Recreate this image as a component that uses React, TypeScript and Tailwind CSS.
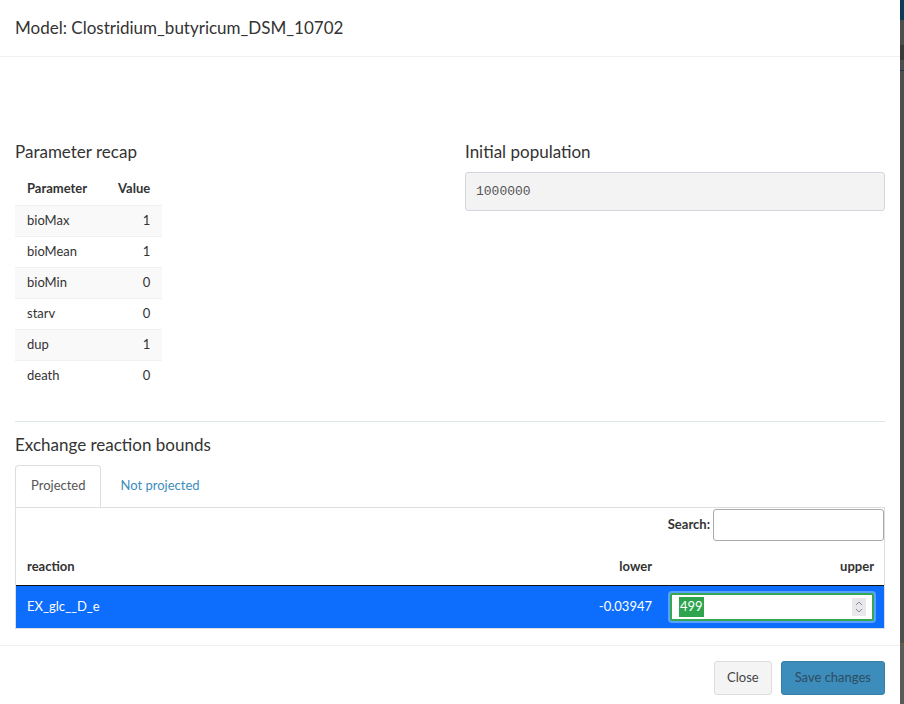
import React from "react";

const params = [
  { name: "bioMax", value: 1 },
  { name: "bioMean", value: 1 },
  { name: "bioMin", value: 0 },
  { name: "starv", value: 0 },
  { name: "dup", value: 1 },
  { name: "death", value: 0 },
];

function Spinner() {
  return (
    <svg width="14" height="18" viewBox="0 0 14 18" className="shrink-0">
      <rect width="14" height="18" fill="#e8e8ec" />
      <path d="M4 7 L7 4 L10 7" fill="none" stroke="#8a8a8a" strokeWidth="1" />
      <path d="M4 11 L7 14 L10 11" fill="none" stroke="#8a8a8a" strokeWidth="1" />
    </svg>
  );
}

export default function App() {
  return (
    <div
      className="flex h-[704px] w-[904px] overflow-hidden bg-white text-[#333]"
      style={{ fontFamily: "Lato, 'Liberation Sans', sans-serif" }}
    >
      {/* modal */}
      <div className="flex w-[900px] flex-col">
        <div className="flex h-[57px] items-center border-b border-[#f0f0f0] px-[15px]">
          <h4 className="text-[17px] text-[#333]">Model: Clostridium_butyricum_DSM_10702</h4>
        </div>

        <div className="px-[15px] pt-[85px]">
          <div className="grid grid-cols-2 gap-[30px]">
            <div>
              <h4 className="text-[17px] leading-[20px]">Parameter recap</h4>
              <table className="mt-[10px] text-[13px]">
                <thead>
                  <tr className="h-[33px]">
                    <th className="px-[12px] text-left font-bold">Parameter</th>
                    <th className="px-[12px] text-right font-bold">Value</th>
                  </tr>
                </thead>
                <tbody>
                  {params.map((p, i) => (
                    <tr
                      key={p.name}
                      className={`h-[31px] border-t border-[#f0f0f0] ${i % 2 === 0 ? "bg-[#f9f9f9]" : "bg-white"}`}
                    >
                      <td className="pl-[12px] pr-[29px]">{p.name}</td>
                      <td className="pl-[12px] pr-[12px] text-right">{p.value}</td>
                    </tr>
                  ))}
                </tbody>
              </table>
            </div>
            <div>
              <h4 className="text-[17px] leading-[20px]">Initial population</h4>
              <div
                className="mt-[10px] flex h-[39px] items-center rounded-[3px] border border-[#d2d6de] bg-[#f3f3f3] px-[10px] text-[13px] text-[#555]"
                style={{ fontFamily: "'Liberation Mono', monospace" }}
              >
                1000000
              </div>
            </div>
          </div>

          <hr className="mt-[30px] border-t border-[#dce8e8]" />

          <h4 className="mt-[13px] text-[17px] leading-[20px]">Exchange reaction bounds</h4>

          <div className="mt-[10px] flex text-[13px]">
            <div className="relative z-10 -mb-px flex h-[42px] items-center rounded-t-[4px] border border-b-white border-[#ddd] bg-white px-[15px] text-[#555]">
              Projected
            </div>
            <div className="flex h-[42px] items-center px-[19px] text-[#3c8dbc]">Not projected</div>
          </div>

          <div className="border border-[#ddd] text-[13px]">
            <div className="flex items-center justify-end gap-[3px] pt-[1px]">
              <span className="font-bold">Search:</span>
              <div className="h-[32px] w-[171px] rounded-[3px] border border-[#aaa]" />
            </div>
            <div className="mt-[8px] grid h-[37px] grid-cols-[1fr_220px_222px] items-center border-b border-[#111] px-[10px] font-bold">
              <span className="pl-[1px]">reaction</span>
              <span className="text-right">lower</span>
              <span className="text-right">upper</span>
            </div>
            <div className="grid h-[42px] grid-cols-[1fr_220px_222px] items-center bg-[#0d6efd] px-[10px] text-white">
              <span className="pl-[1px]">EX_glc__D_e</span>
              <span className="text-right">-0.03947</span>
              <div className="flex justify-end pl-[18px]">
                <div className="flex h-[28px] w-[205px] items-center rounded-[2px] border-2 border-[#34a853] bg-white pl-[7px] pr-[6px] shadow-[0_0_0_2px_#5aa0ff]">
                  <span className="bg-[#2ea44f] px-[1px] text-white">499</span>
                  <span className="flex-1" />
                  <Spinner />
                </div>
              </div>
            </div>
          </div>
        </div>

        <div className="mt-[16px] flex items-center justify-end gap-[9px] border-t border-[#f0f0f0] px-[15px] pt-[15px] text-[13px]">
          <div className="flex h-[34px] items-center rounded-[3px] border border-[#ddd] bg-[#f4f4f4] px-[12px] text-[#444]">
            Close
          </div>
          <div className="flex h-[34px] items-center rounded-[3px] border border-[#367fa9] bg-[#3c8dbc] px-[13px] text-[#2e4c60]">
            Save changes
          </div>
        </div>
      </div>

      {/* backdrop strip */}
      <div className="flex w-[4px] flex-col bg-[#4e4e4e]">
        <div className="h-[20px] bg-[#0f3a57]" />
        <div className="mt-[25px] h-[15px] bg-[#3a3a3a]" />
        <div className="mt-[10px] h-[1px] bg-[#1f3a55]" />
        <div className="flex-1" />
        <div className="h-[1px] bg-[#7a5a2a]" />
        <div className="h-[60px] bg-[#5a5a5a]" />
      </div>
    </div>
  );
}
